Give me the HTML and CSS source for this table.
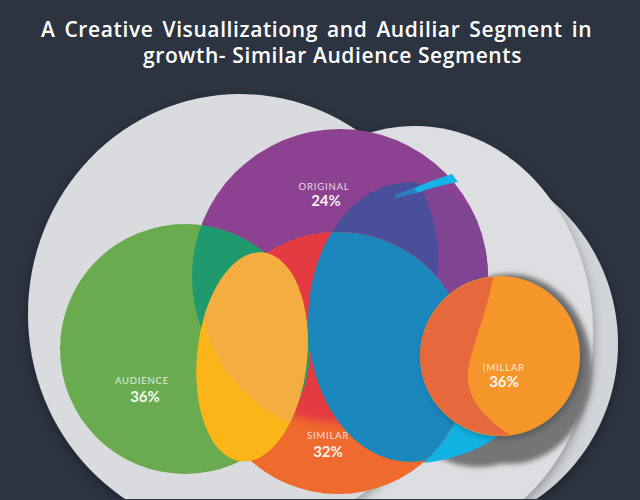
FILE: index.html
```html
<!DOCTYPE html>
<html lang="en">
<head>
<meta charset="utf-8">
<title>Similar Audience Segments</title>
<link rel="stylesheet" href="styles.css">
</head>
<body>
<header class="page-head">
  <h1 class="title">
    <span class="line line-1">A Creative Visuallizationg and Audiliar Segment in</span>
    <span class="line line-2">growth- Similar Audience Segments</span>
  </h1>
</header>
<figure class="chart">
  <svg class="venn" width="640" height="420" viewBox="0 80 640 420" xmlns="http://www.w3.org/2000/svg">
    <defs>
      <filter id="soft" x="-20%" y="-20%" width="140%" height="140%">
        <feDropShadow dx="0" dy="4" stdDeviation="6" flood-color="#000" flood-opacity="0.35"/>
      </filter>
      <filter id="softSmall" x="-20%" y="-20%" width="140%" height="140%">
        <feDropShadow dx="2" dy="3" stdDeviation="3" flood-color="#000" flood-opacity="0.25"/>
      </filter>
      <filter id="blur2" x="-20%" y="-20%" width="140%" height="140%">
        <feGaussianBlur stdDeviation="2.5"/>
      </filter>
      <filter id="blur4" x="-20%" y="-20%" width="140%" height="140%">
        <feGaussianBlur stdDeviation="4"/>
      </filter>
      <clipPath id="cPurple"><circle cx="340" cy="278" r="148"/></clipPath>
      <clipPath id="cR"><circle cx="338" cy="364" r="131"/></clipPath>
      <clipPath id="cRr"><circle cx="280" cy="260" r="158"/></clipPath>
      <mask id="mPurple" maskUnits="userSpaceOnUse" x="0" y="80" width="640" height="420">
        <circle cx="340" cy="278" r="146" fill="#fff" filter="url(#blur4)"/>
      </mask>
    </defs>

    <!-- grey backdrop discs -->
    <circle cx="430" cy="345" r="188" fill="#d1d4d8" filter="url(#soft)"/>
    <ellipse cx="415" cy="335" rx="178" ry="208" fill="#dcdee1" filter="url(#soft)"/>
    <ellipse cx="240" cy="315" rx="212" ry="220" fill="#d9dbde" filter="url(#soft)"/>

    <!-- grey shadow under bubble -->
    <g filter="url(#blur2)">
      <ellipse cx="510" cy="370" rx="82" ry="95" fill="#737477"/>
      <ellipse cx="478" cy="410" rx="70" ry="58" fill="#737477"/>
    </g>

    <!-- cyan lower crescent -->
    <path d="M380,405 L500,395 L500,436 Q470,457 432,463 Q400,466 380,462 Z" fill="#12b2e3"/>

    <!-- ORIGINAL -->
    <circle cx="340" cy="278" r="148" fill="#8d4291"/>
    <g clip-path="url(#cPurple)">
      <ellipse cx="410" cy="323" rx="102" ry="140" fill="#7f4593"/>
      <ellipse clip-path="url(#cRr)" cx="410" cy="323" rx="102" ry="140" fill="#4a4f9b"/>
    </g>
    <path d="M412,190 Q432,181 452,175 L458,183 Q436,187 417,194 Z" fill="#14b4e6"/>
    <path d="M395,196 Q404,192 414,189 L418,194 Q406,196 396,199 Z" fill="#2b7fc3"/>

    <!-- SIMILAR (red/orange) -->
    <circle cx="338" cy="364" r="131" fill="#ee6a2d"/>
    <circle cx="338" cy="364" r="131" fill="#e43b43" mask="url(#mPurple)"/>

    <!-- AUDIENCE -->
    <circle cx="185" cy="350" r="125" fill="#6aab50"/>
    <circle clip-path="url(#cPurple)" cx="185" cy="350" r="125" fill="#1f9a6f"/>

    <!-- yellow lens -->
    <ellipse cx="252" cy="358" rx="55" ry="105" transform="rotate(6 252 358)" fill="#fcb518"/>
    <ellipse clip-path="url(#cPurple)" cx="252" cy="358" rx="55" ry="105" transform="rotate(6 252 358)" fill="#f4ad40"/>

    <!-- blue lens -->
    <ellipse clip-path="url(#cR)" cx="410" cy="323" rx="102" ry="140" fill="#1b87bd"/>

    <!-- small orange bubble -->
    <g filter="url(#softSmall)">
      <circle cx="500" cy="357" r="80" fill="#f4962c"/>
    </g>
    <path d="M493,278 C487,315 472,345 468,372 C465,398 485,420 510,436 A80,80 0 0 1 420,357 A80,80 0 0 1 493,278 Z" fill="#e6683d"/>

    <!-- labels -->
    <text class="lbl" x="324" y="191" text-anchor="middle">ORIGINAL</text>
    <text class="pct" x="326" y="207" text-anchor="middle">24%</text>
    <text class="lbl" x="142" y="385" text-anchor="middle">AUDIENCE</text>
    <text class="pct" x="145" y="403" text-anchor="middle">36%</text>
    <text class="lbl" x="328" y="440" text-anchor="middle">SIMILAR</text>
    <text class="pct" x="328" y="458" text-anchor="middle">32%</text>
    <text class="lbl" x="504" y="372" text-anchor="middle">(MILLAR</text>
    <text class="pct" x="504" y="388" text-anchor="middle">36%</text>
  </svg>
</figure>
</body>
</html>
```

FILE: styles.css
```css
html, body {
  margin: 0;
  padding: 0;
}

body {
  width: 640px;
  height: 500px;
  overflow: hidden;
  background: #2c3442;
  font-family: "Lato", "Open Sans", "DejaVu Sans", sans-serif;
}

.page-head {
  padding: 16px 0 11px;
}

.title {
  margin: 0;
  text-align: center;
  color: #ffffff;
  font-family: "Open Sans", "Lato", sans-serif;
  font-size: 21px;
  font-weight: 600;
  line-height: 26px;
  letter-spacing: 0.6px;
  word-spacing: 3px;
}

.line {
  display: block;
}

.line-1 {
  padding-right: 7px;
}

.line-2 {
  padding-left: 25px;
  word-spacing: 0;
}

.chart {
  margin: 0;
}

.venn {
  display: block;
}

.lbl {
  font-family: "Lato", "Open Sans", sans-serif;
  font-size: 9.5px;
  letter-spacing: 0.8px;
  fill: rgba(255, 255, 255, 0.82);
}

.pct {
  font-family: "Lato", "Open Sans", sans-serif;
  font-size: 15px;
  font-weight: 700;
  fill: #ffffff;
  fill-opacity: 0.95;
}
```
